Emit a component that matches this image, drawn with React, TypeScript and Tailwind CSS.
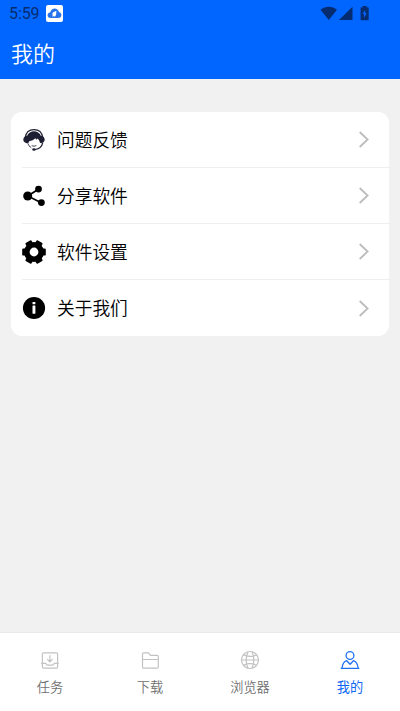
import type { ReactNode } from 'react';

const MENU_ITEMS: { label: string; icon: ReactNode }[] = [
  { label: '问题反馈', icon: <SupportIcon /> },
  { label: '分享软件', icon: <ShareIcon /> },
  { label: '软件设置', icon: <GearIcon /> },
  { label: '关于我们', icon: <InfoIcon /> },
];

const TABS: { label: string; icon: ReactNode; active?: boolean }[] = [
  { label: '任务', icon: <InboxIcon /> },
  { label: '下载', icon: <FolderIcon /> },
  { label: '浏览器', icon: <GlobeIcon /> },
  { label: '我的', icon: <PersonIcon />, active: true },
];

function SupportIcon() {
  return (
    <svg className="size-6" viewBox="0 0 24 24" fill="none">
      <path d="M3.2 9.5C4 4.3 7.4 1.6 12 1.6s8 2.7 8.8 7.9" stroke="#1f1f33" strokeWidth="1.1" />
      <path
        d="M4.6 15.2C3.4 8.2 6.5 3.3 12 3.3s8.6 4.9 7.4 11.9c-1 0-1.6-.5-1.8-1.4-.2-1.5-1-2.6-2.1-3.4l-.9 1.4-1.2-1.5c-1.6 1.6-3.8 2.6-6 2.7-.2 1.3-.8 2.4-2.8 2.2z"
        fill="#1f1f33"
      />
      <path d="M5.2 7.4C2.7 7.8 1.3 9.5 1.3 11.5s1.4 3.5 3.9 3.7zM18.8 7.4c2.5.4 3.9 2.1 3.9 4.1s-1.4 3.5-3.9 3.7z" fill="#1f1f33" />
      <path d="M5.9 15.4c.8 2.1 1.9 3.4 3.4 4.4" stroke="#1f1f33" strokeWidth=".9" />
      <path d="M9.4 17c1.3 1.1 3.9 1.1 5.2 0-.6 2-4.6 2-5.2 0z" fill="#1f1f33" />
      <path d="M20.8 14.6c-.8 3.8-3.5 6.3-7.6 6.9" stroke="#1f1f33" strokeWidth="1.2" />
      <ellipse cx="12" cy="21.5" rx="1.8" ry="1.3" fill="#1f1f33" />
    </svg>
  );
}

function ShareIcon() {
  return (
    <svg className="size-6" viewBox="0 0 24 24">
      <path d="M16.4 5.2 5.8 12l13.4 6.7" fill="none" stroke="#000" strokeWidth="1.7" />
      <circle cx="5.7" cy="12" r="4.5" />
      <circle cx="16.5" cy="5.1" r="3.4" />
      <circle cx="19.4" cy="18.6" r="3.4" />
    </svg>
  );
}

function GearIcon() {
  return (
    <svg className="size-6" viewBox="0 0 24 24">
      <circle cx="12" cy="12" r="7.2" fill="none" stroke="#000" strokeWidth="5.6" />
      <path
        d="M4.4 9.6H1.4v4.8h3zM19.6 9.6h3v4.8h-3zM10.2 4.2 8.7 1.6 4.7 3.9l1.5 2.6zM13.8 19.8l1.5 2.6 4-2.3-1.5-2.6zM13.8 4.2l1.5-2.6 4 2.3-1.5 2.6zM10.2 19.8l-1.5 2.6-4-2.3 1.5-2.6z"
        stroke="#000"
        strokeWidth="2.4"
        strokeLinejoin="round"
      />
    </svg>
  );
}

function InfoIcon() {
  return (
    <svg className="size-6" viewBox="0 0 24 24">
      <circle cx="12" cy="12" r="11.1" />
      <rect x="10.5" y="6" width="2.9" height="2.2" rx=".5" fill="#fff" />
      <rect x="10.5" y="9.6" width="2.9" height="8.2" rx=".5" fill="#fff" />
    </svg>
  );
}

function InboxIcon() {
  return (
    <svg className="size-5" viewBox="0 0 20 20" fill="none" stroke="currentColor" strokeWidth="1.2">
      <rect x="2.4" y="2.9" width="15.2" height="15.3" rx="1.2" />
      <path d="M1.2 13.4h4.6c.3 1.2 1.1 1.8 2.2 1.8h4c1.1 0 1.9-.6 2.2-1.8h4.4M9.9 5.2v6.4M7.2 9.2l2.7 2.7 2.7-2.7" />
    </svg>
  );
}

function FolderIcon() {
  return (
    <svg className="size-5" viewBox="0 0 20 20" fill="none" stroke="currentColor" strokeWidth="1.2">
      <path d="M2.5 16.9V4c0-.7.4-1.1 1.1-1.1h4.8l2.1 2.5h6.6c.7 0 1.2.4 1.2 1.1v10.5c0 .8-.4 1.2-1.2 1.2H3.7c-.8 0-1.2-.4-1.2-1.3zM2.5 9.5h15.8" />
    </svg>
  );
}

function GlobeIcon() {
  return (
    <svg className="size-5" viewBox="0 0 20 20" fill="none" stroke="currentColor" strokeWidth="1.2">
      <circle cx="10" cy="10" r="8.5" />
      <path d="M1.5 10h17M3.7 4.9c3.6 1.6 9 1.6 12.6 0M3.7 15.1c3.6-1.6 9-1.6 12.6 0M7.9 1.8C5.7 7 5.7 13 7.9 18.2M12.1 1.8c2.2 5.2 2.2 11.2 0 16.4" />
    </svg>
  );
}

function PersonIcon() {
  return (
    <svg className="size-5" viewBox="0 0 20 20" fill="none" stroke="currentColor" strokeWidth="1.3">
      <circle cx="10" cy="5.5" r="3.9" />
      <path d="M.7 18.3h18.6M2 18.2c.4-3.8 1.9-6.6 4.7-7.5l3.4 3.6 3.3-3.6c2.8.9 4.3 3.7 4.7 7.5" />
    </svg>
  );
}

function StatusBar() {
  return (
    <div className="flex h-[27px] items-center pl-[9px] text-[#052c70]">
      <span className="w-[36.5px] pt-px font-[Roboto,sans-serif] text-[16px] leading-5 tracking-[-0.1px]">5:59</span>
      <svg className="size-[17px]" viewBox="0 0 17 17">
        <rect width="17" height="17" rx="2" fill="#fff" />
        <path d="M4.7 13.1c-4.2 0-4-5.3-.4-5.8C5.2 2.3 12 2.2 12.9 7c3.6.8 3.3 6.1-.6 6.1z" fill="#2873eb" />
        <path d="M10.4 5.8 6.9 7.4l-.8 2 .9.3-.9 1.7 2.3-.4.3 1.2 1.4-2.5z" fill="#fff" />
      </svg>
      <svg className="ml-[257px] h-[15px] w-[50px]" viewBox="0 0 50 15" fill="currentColor">
        <path d="M.5 3.8C5.3-.2 12.2-.2 17 3.8L8.8 14z" />
        <path d="M32.5.8V14H19z" />
        <path d="M42.6 0h4.1v1.4h2v12.8h-8.1V1.4h2z" />
        <path d="M45.2 3.9 42.5 8.1H44v3.7l2.8-4.5h-1.6z" fill="#0066ff" />
      </svg>
    </div>
  );
}

export default function App() {
  return (
    <div className="flex h-[711px] w-[400px] flex-col bg-[#f1f1f1] font-['Noto_Sans_CJK_SC',sans-serif]">
      <header className="h-[79px] bg-[#0066ff]">
        <StatusBar />
        <h1 className="pl-[11px] text-[22px] leading-[50px] font-[350] text-white">我的</h1>
      </header>

      <main className="flex-1 px-[11px] pt-[33px]">
        <ul className="overflow-hidden rounded-[11px] bg-white">
          {MENU_ITEMS.map(({ label, icon }) => (
            <li key={label} className="group pl-[11px]">
              <button className="flex h-14 w-full items-center border-b border-[#eeeeee] pr-5 group-last:border-b-0">
                {icon}
                <span className="ml-[11px] pb-0.5 text-[17.7px] leading-7 font-[350] text-black">{label}</span>
                <svg className="ml-auto h-[17px] w-[10px]" viewBox="0 0 10 17" fill="none">
                  <path d="M.7 1 8.6 8.5.7 16" stroke="#bcbcbc" strokeWidth="1.8" />
                </svg>
              </button>
            </li>
          ))}
        </ul>
      </main>

      <nav className="grid h-[79px] grid-cols-4 border-t border-[#e8e8e8] bg-white">
        {TABS.map(({ label, icon, active }) => (
          <button key={label} className="flex flex-col items-center pt-[17px]">
            <span className={active ? 'text-[#2070f4]' : 'text-[#c2c2c2]'}>{icon}</span>
            <span
              className={`mt-[7px] text-[13.2px] leading-5 ${active ? 'font-normal text-[#1268f5]' : 'font-[350] text-[#707070]'}`}
            >
              {label}
            </span>
          </button>
        ))}
      </nav>
    </div>
  );
}
